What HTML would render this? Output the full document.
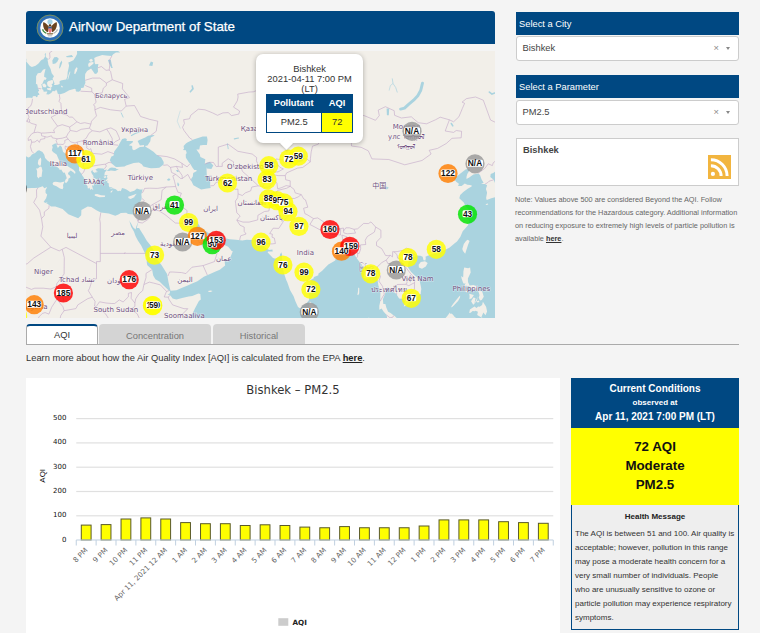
<!DOCTYPE html>
<html lang="en">
<head>
<meta charset="utf-8">
<title>AirNow Department of State</title>
<style>
html,body{margin:0;padding:0;}
body{width:760px;height:633px;overflow:hidden;background:#f4f4f4;font-family:"Liberation Sans",Arial,sans-serif;color:#333;position:relative;}
.abs{position:absolute;}
#hdr{left:26px;top:11px;width:469px;height:33px;background:#004882;border-radius:3px 3px 0 0;}
#hdr .ttl{position:absolute;left:43px;top:-1.5px;line-height:33px;-webkit-text-stroke:0.25px #fff;color:#fff;font-size:13.33px;white-space:nowrap;}
#seal{position:absolute;left:9.5px;top:2.6px;}
#map{left:26px;top:51px;width:469px;height:267px;background:#f2efe9;overflow:hidden;}
.bar{background:#004882;color:#fff;font-size:9.33px;left:516px;width:223px;height:23.5px;line-height:24px;text-indent:3px;}
.sel{left:515.5px;width:221px;height:23px;border:1px solid #ccc;border-radius:3px;background:#fff;font-size:9.33px;line-height:22px;color:#444;}
.sel span{position:absolute;left:6px;}
.sel i{position:absolute;font-style:normal;}
#citybox{left:516px;top:138px;width:221px;height:46px;border:1px solid #ccc;background:#fff;}
#citybox b{position:absolute;left:6px;top:6px;font-size:9.33px;color:#444;}
#note{left:515px;top:193px;width:228px;font-size:7.33px;line-height:13px;color:#666;}
#note b{color:#333;text-decoration:underline;}
.tab{top:324px;height:20px;line-height:24.5px;text-align:center;font-size:9.33px;color:#777;background:#d4d4d4;border-radius:4px 4px 0 0;}
#tab1{left:26px;width:70px;height:18px;background:#fff;color:#333;border:1px solid #aaa;border-top:2px solid #004882;border-bottom:none;line-height:19.5px;}
#tabline{left:26px;top:344px;width:713px;height:1px;background:#aaa;}
#learn{left:26px;top:351px;font-size:9.33px;line-height:14px;color:#333;white-space:nowrap;}
#learn b{text-decoration:underline;color:#222;}
#chart{left:26px;top:378px;width:534px;height:255px;background:#fff;}
#cc{left:571px;top:378px;width:168px;height:250px;background:#eee;}
#cc .h{position:absolute;left:0;top:0;width:168px;height:50px;background:#004882;color:#fff;text-align:center;font-weight:bold;font-size:10px;line-height:14px;}
#cc .y{position:absolute;left:0;top:50px;width:168px;height:77px;background:#ffff00;color:#111;text-align:center;font-weight:bold;font-size:13.33px;line-height:19px;}
#cc .m{position:absolute;left:0;top:127px;width:166px;height:123.5px;border:1px solid #004882;border-top:none;background:#eee;}
#cc .m .t{position:absolute;left:0;top:4.8px;width:166px;text-align:center;font-weight:bold;font-size:8px;line-height:14px;color:#222;}
#cc .m .p{position:absolute;left:3px;top:22.2px;width:164px;font-size:8px;line-height:14px;color:#333;}
#pop{position:absolute;left:229.8px;top:2.8px;width:107.5px;height:89.7px;background:#fff;border-radius:7px;box-shadow:0 1px 5px rgba(0,0,0,.3);font-size:9.33px;color:#333;}
#pop .pt{position:absolute;left:0;top:10px;width:107.5px;text-align:center;line-height:10.1px;}
#pop .th{position:absolute;left:10.1px;top:40.2px;width:87px;height:18.6px;background:#004882;color:#fff;font-weight:bold;line-height:18px;}
#pop .tb{position:absolute;left:10.1px;top:57.8px;width:85px;height:19px;border:1px solid #004882;background:#fff;line-height:18.4px;}
#pop span{position:absolute;top:0;height:100%;text-align:center;}
#pop i{position:absolute;left:26.2px;top:85.2px;width:9px;height:9px;background:#fff;transform:rotate(45deg);box-shadow:1px 1px 2px rgba(0,0,0,.15);}
.sel i.arr{right:8px;top:10px;width:0;height:0;border-left:2.5px solid transparent;border-right:2.5px solid transparent;border-top:3px solid #888;}
</style>
</head>
<body>
<div id="hdr" class="abs"><svg id="seal" width="28" height="28" viewBox="-14 -14 28 28">
<circle r="13.0" fill="#2f6fb5" stroke="#8f9a4e" stroke-width="0.8"/>
<circle r="9.8" fill="#fdfdfb"/>
<circle cx="0" cy="-6.2" r="2.6" fill="#a6d3e6"/>
<path d="M-1.2 -1.5C-3 -3.5 -5 -6 -6.8 -5.6C-7.4 -2 -6 2.5 -2.2 4.2L-1.4 1.5Z" fill="#6b4420"/>
<path d="M1.2 -1.5C3 -3.5 5 -6 6.8 -5.6C7.4 -2 6 2.5 2.2 4.2L1.4 1.5Z" fill="#6b4420"/>
<path d="M-1.6 -1.2h3.2v2h-3.2z" fill="#2d5d9a"/>
<path d="M-1.6 0.6h3.2v2.2c0 1.2-1 1.9-1.6 2.2c-0.6-0.3-1.6-1-1.6-2.2z" fill="#f07a84"/>
<path d="M-1.3 -2.6a1.3 1.1 0 0 1 2.6 0v1.2h-2.6z" fill="#5a3a1c"/>
<path d="M-8 1.5c0.5 2 2 3.6 4 4.2l0.6-1c-1.8-0.6-3-1.8-3.4-3.6z" fill="#3f8a3c"/>
<path d="M8 1.5c-0.5 2-2 3.6-4 4.2l-0.6-1c1.8-0.6 3-1.8 3.4-3.6z" fill="#b9b9b9"/>
<path d="M-3.5 5.2h7l-1 1.2h-5z" fill="#7a5a30"/>
<path d="M-2.6 6.8h5.2l-0.8 1.6h-3.6z" fill="#c9c9c9"/>
</svg><span class="ttl">AirNow Department of State</span></div>
<div id="map" class="abs"><svg width="469" height="267" viewBox="0 0 469 267" style="position:absolute;left:0;top:0">
<path d="M-3.8 49.8L-2.8 49.8L-1.5 47.6L1.6 46.8L5.4 46.8L6.1 47.6L6.9 45.2L9.6 44.9L10.1 46.3L11.5 45.7L11.8 43.9L13.4 43.9L13.0 42.4L11.8 40.9L13.2 39.8L12.0 37.2L11.3 33.4L9.9 32.8L10.1 29.8L10.1 25.3L11.8 22.2L14.9 21.7L17.0 18.8L19.5 17.7L19.1 19.8L18.3 22.9L18.1 25.7L20.6 26.9L19.8 28.8L18.1 28.8L17.2 30.8L16.4 32.7L15.3 33.2L15.8 35.2L16.4 37.2L15.3 37.7L17.2 38.8L17.7 40.8L20.6 40.6L21.4 40.8L20.2 43.3L22.7 43.5L25.2 42.0L26.7 40.0L29.0 40.2L30.1 38.6L31.3 40.8L31.6 42.4L33.3 43.6L38.4 41.9L43.2 39.2L48.8 37.7L50.7 39.2L49.5 38.8L50.1 40.6L53.0 40.7L54.9 39.0L55.0 36.9L57.5 36.7L59.4 31.8L59.2 29.8L59.0 26.4L59.2 22.9L61.1 20.1L65.1 17.6L67.0 20.3L68.9 22.9L70.8 22.6L72.0 20.8L71.8 16.8L72.4 13.1L69.3 13.3L68.6 11.5L68.6 8.9L68.2 7.1L70.7 5.8L73.3 5.0L76.2 3.9L80.0 4.4L85.9 5.0L87.2 3.3L89.9 1.6L92.2 1.6L94.1 1.6L93.3 0.8L91.4 -0.3L89.5 -0.5L88.7 -6.2L50.7 -6.2L51.1 2.9L49.5 5.9L47.4 9.3L44.2 10.7L42.3 11.5L43.1 14.4L42.5 17.6L41.7 21.0L41.4 25.3L40.2 28.4L38.5 28.8L34.7 29.5L33.5 30.5L33.7 32.9L31.6 33.7L29.2 34.1L27.9 34.0L28.6 32.5L27.4 29.5L26.5 27.8L28.0 25.2L25.7 22.2L24.6 18.0L22.5 13.9L21.6 9.1L22.1 7.8L20.8 7.1L19.6 5.3L20.0 1.8L18.7 3.3L19.1 5.6L17.2 8.5L16.2 8.5L14.9 9.5L12.5 12.5L9.6 14.8L5.9 16.0L4.0 15.1L1.9 12.6L0.2 10.4L0.4 8.5L-0.9 5.6L-1.1 3.3L-1.7 -6.2L-3.8 -6.2Z M26.3 9.6L28.2 6.3L30.9 5.9L32.8 7.8L31.3 10.7L29.4 12.6L26.7 12.9Z M33.0 17.3L33.9 12.2L35.8 9.6L36.2 11.5L34.7 15.8L33.5 17.6Z M40.0 5.2L45.7 4.1L47.2 5.9L43.8 6.3L40.8 6.3Z M81.9 8.9L84.7 8.5L85.5 12.2L86.3 15.8L86.8 16.9L85.3 16.9L84.2 14.7L83.0 12.2Z M-3.8 104.5L-2.8 104.5L-0.5 105.1L1.8 106.2L2.7 106.4L4.4 105.6L5.7 103.8L6.8 103.0L8.8 102.3L11.5 99.8L13.1 99.2L16.5 101.0L18.3 103.8L19.1 107.0L21.7 109.7L24.0 111.3L25.7 113.0L27.2 114.6L30.8 115.8L33.3 117.7L33.7 118.9L35.3 118.5L36.1 120.1L37.3 121.7L38.7 121.5L40.1 125.1L40.8 127.3L39.4 128.7L38.7 131.2L40.2 132.1L42.2 129.8L42.4 127.7L44.3 126.4L44.2 124.9L41.9 123.1L42.4 121.4L44.7 119.5L47.6 121.6L49.0 122.9L49.5 121.1L47.4 118.7L43.3 116.2L39.7 113.7L40.7 112.3L37.3 112.2L36.2 111.8L33.2 109.4L30.6 103.4L27.0 101.0L25.8 99.2L26.7 96.3L26.0 94.2L29.0 92.4L31.5 92.5L30.5 93.7L31.8 96.9L32.8 96.1L34.0 94.3L35.8 96.1L37.0 100.8L39.6 102.8L41.7 104.0L45.5 106.4L48.0 108.5L49.7 109.7L51.8 111.3L53.1 115.3L53.0 119.6L55.2 122.5L56.3 124.4L58.1 127.1L59.4 130.0L61.8 130.5L64.4 130.7L66.5 131.9L64.0 131.4L61.8 131.0L59.5 132.0L60.2 133.4L61.6 135.3L61.7 137.3L62.7 137.4L63.2 136.4L64.7 139.3L65.0 137.7L67.4 139.1L66.9 137.9L66.3 135.8L65.9 133.9L67.2 135.0L68.2 133.6L66.9 132.2L69.1 132.0L70.6 133.4L70.5 131.0L72.7 131.8L71.0 128.6L67.8 126.7L66.5 125.4L68.0 125.8L67.4 124.9L65.5 122.1L65.1 120.5L66.4 118.7L66.7 120.4L69.3 122.2L68.9 120.9L70.5 122.1L70.1 120.4L72.0 121.2L69.5 118.4L72.0 117.2L77.6 117.6L78.3 118.9L81.1 118.6L78.8 121.6L78.7 122.0L78.3 124.5L81.7 124.1L80.7 125.4L81.6 127.2L79.2 130.2L82.4 129.6L80.7 131.0L82.8 132.4L82.8 134.8L83.5 136.3L86.8 136.3L83.3 138.0L86.7 137.2L89.9 138.2L91.9 140.3L93.9 139.8L94.8 140.3L96.0 137.1L98.8 137.7L100.9 138.7L104.1 141.1L108.3 139.8L110.9 137.5L113.8 138.6L116.8 138.4L116.9 137.0L116.0 140.9L115.3 143.5L115.7 146.5L115.5 148.4L114.2 151.0L113.1 153.9L112.3 155.9L111.4 159.3L110.3 161.8L107.8 163.4L102.1 162.9L100.2 161.8L94.8 162.0L92.9 163.2L89.3 164.8L82.8 162.5L74.8 161.6L70.4 159.2L65.3 156.1L61.7 155.4L55.4 159.1L55.2 164.3L52.2 167.3L42.3 163.2L36.6 157.9L29.3 155.5L25.1 155.4L21.0 152.4L17.6 151.1L20.1 147.2L21.2 143.6L19.6 142.0L19.5 139.3L21.2 136.1L18.3 137.2L16.7 135.2L12.4 136.7L8.7 137.0L5.4 137.1L1.1 137.3L-1.6 137.7L-2.8 137.1L-3.8 137.1Z M80.6 119.8L83.0 119.9L84.9 119.4L89.1 120.1L92.9 118.3L90.6 117.9L89.5 116.9L85.7 116.6L83.8 117.0L81.9 118.9Z M89.9 115.9L85.7 112.4L83.8 109.2L85.4 105.6L87.5 104.7L88.2 100.5L92.0 95.5L94.1 91.4L96.2 88.0L99.0 87.3L100.9 87.9L100.5 90.1L104.0 90.1L107.0 90.1L106.6 91.4L102.8 94.2L106.1 95.0L106.4 98.2L107.8 99.3L109.2 98.7L112.2 96.9L113.9 95.9L117.9 95.8L118.1 93.9L113.9 94.4L111.6 90.1L113.5 89.0L119.2 86.5L122.1 84.7L127.2 84.0L128.7 84.5L124.8 86.6L124.3 90.3L121.5 94.4L118.8 95.0L121.1 96.7L123.0 97.7L127.8 100.9L130.3 103.6L135.2 106.6L137.7 111.0L137.6 113.6L133.3 116.7L130.3 116.9L125.3 117.3L123.3 116.9L117.4 115.4L115.8 113.2L112.9 111.6L107.7 111.9L100.2 114.6L98.6 115.5L91.8 116.0Z M159.9 92.5L161.8 91.2L167.5 88.4L176.7 85.6L180.9 85.6L181.6 89.0L180.9 93.9L177.1 93.9L174.0 94.4L173.3 98.5L170.4 98.5L173.8 103.2L174.4 105.9L179.3 108.2L178.8 113.1L180.5 111.8L183.9 110.8L187.3 114.4L185.4 117.9L180.9 117.4L180.5 115.9L180.7 121.9L180.9 124.9L183.2 125.4L184.3 127.3L184.1 134.8L184.7 137.0L180.9 137.4L179.5 137.8L175.2 138.4L171.9 136.7L167.4 134.2L165.1 129.6L165.1 128.0L166.8 125.4L167.2 121.9L170.8 120.1L170.2 119.1L168.3 118.9L166.4 116.4L164.1 112.6L163.0 111.4L159.9 106.7L159.7 103.5L160.7 101.9L159.9 99.3L156.9 99.0L158.0 97.7L157.6 95.0Z M258.5 95.0L260.8 89.5L266.5 86.5L274.1 86.8L280.6 86.2L280.6 88.7L274.9 89.0L267.3 88.4L263.1 92.3L261.2 96.3Z M269.2 109.5L273.4 108.1L277.6 108.2L276.8 110.0L273.0 111.2L270.3 110.8Z M358.3 137.0L360.6 135.5L362.8 136.7L360.9 138.6Z M151.2 132.7L151.9 131.2L153.3 133.6L152.7 135.3L151.7 135.1Z M140.9 128.8L142.8 127.3L144.5 128.3L143.2 129.8L141.7 129.5Z M150.0 118.9L151.9 118.9L152.9 120.9L151.2 120.9Z M123.0 14.4L124.9 10.4L127.2 11.5L126.4 15.1Z M165.3 34.5L166.8 34.2L167.9 37.9L164.5 41.8L163.4 40.8L166.0 37.5Z M360.6 57.6L363.2 57.6L362.8 64.3L360.9 64.3Z M481.6 94.4L485.1 94.4L485.1 98.7L481.6 98.7Z M289.4 89.0L292.0 89.0L291.3 91.2L289.4 91.2Z M297.0 78.9L302.3 78.3L301.9 80.6L297.4 80.6Z M163.7 270.8L163.9 267.9L168.8 257.8L172.9 250.0L174.8 248.4L174.3 242.9L172.3 242.4L166.3 245.1L162.6 245.5L156.1 247.1L150.4 248.4L146.6 247.5L144.6 244.8L143.4 243.8L141.7 243.9L143.2 242.5L143.9 242.4L143.9 240.3L141.8 238.4L137.5 234.5L133.7 230.7L129.4 228.2L127.2 224.6L126.1 218.6L121.3 214.2L120.8 212.1L120.7 206.5L118.6 201.6L115.2 194.6L112.0 189.7L109.6 185.3L107.9 180.4L105.1 175.7L103.0 168.7L103.6 170.2L105.1 172.6L107.1 176.2L109.6 178.4L109.8 177.6L110.5 175.0L112.3 170.5L112.1 171.6L110.8 177.0L113.1 177.0L114.9 180.0L117.9 184.8L120.8 189.8L124.0 193.8L127.6 199.1L128.2 204.5L132.4 210.0L135.5 214.1L141.1 223.0L142.5 231.3L143.8 237.1L144.6 239.7L150.4 239.2L156.1 236.8L161.1 234.7L166.1 232.4L171.4 230.3L177.8 225.8L185.1 222.6L189.6 220.6L193.8 218.8L199.1 214.6L198.8 212.0L198.8 208.9L202.2 208.9L204.9 204.9L206.8 200.2L205.7 200.1L202.2 195.7L195.1 192.6L193.6 189.4L193.8 184.3L192.6 185.5L192.1 186.6L189.5 188.8L186.1 192.2L179.3 193.3L175.5 193.9L174.0 191.6L175.5 190.0L175.4 188.7L175.5 186.2L174.0 185.1L172.5 187.8L172.7 191.0L170.2 187.2L169.8 183.9L170.0 183.0L168.1 181.5L165.3 178.9L163.7 175.3L161.8 171.2L161.1 171.1L162.2 170.5L161.8 168.5L164.1 168.7L165.6 166.7L166.4 166.5L167.9 168.3L170.0 168.3L172.6 173.2L175.2 177.8L177.3 177.9L179.3 179.8L183.5 182.8L188.0 183.4L193.3 180.7L195.7 181.5L196.3 183.2L199.0 187.2L203.7 188.3L209.9 188.7L216.4 189.4L220.7 188.8L225.1 189.1L230.4 188.3L232.6 188.5L234.1 190.7L235.7 194.1L238.7 195.8L240.6 197.5L243.1 199.0L246.4 198.5L246.7 200.4L242.0 200.5L241.7 201.5L244.1 203.9L247.0 206.9L249.4 207.7L253.6 205.7L254.0 203.4L255.3 201.2L256.1 203.8L255.9 206.1L256.4 208.9L256.3 214.8L258.1 222.6L260.1 228.8L261.3 231.3L264.0 238.9L267.6 245.2L269.4 250.2L272.0 255.9L274.3 257.4L276.6 254.7L279.9 252.9L283.1 248.9L283.1 247.1L283.0 242.6L284.8 238.1L284.2 234.5L284.2 232.5L284.6 229.0L287.5 227.6L288.0 226.0L292.4 224.2L292.3 222.8L296.2 219.8L302.3 213.5L305.9 211.4L309.2 209.5L310.3 205.7L310.3 204.7L312.3 204.0L314.5 203.9L317.9 203.8L321.7 202.8L324.0 200.8L325.5 200.4L328.6 201.2L329.2 204.7L330.5 207.1L332.8 210.0L335.2 213.0L338.1 217.4L338.9 221.8L337.7 226.4L339.2 227.2L342.3 227.7L345.7 225.0L348.0 221.4L350.7 224.8L351.6 229.5L352.4 234.5L354.5 240.6L354.3 246.2L354.3 250.1L353.5 253.9L353.3 254.7L353.3 258.7L355.6 257.6L357.5 260.4L360.0 263.3L360.3 263.9L360.9 265.0L361.1 267.7L361.1 270.8Z M371.6 270.8L371.7 268.0L368.4 264.7L366.8 263.8L364.6 262.0L362.1 260.8L360.2 256.2L359.4 253.1L357.3 253.1L356.9 248.3L359.0 243.1L359.7 240.1L359.8 237.2L362.1 236.4L363.2 238.7L363.2 239.8L364.7 239.7L367.8 241.1L370.8 243.3L371.2 244.6L373.1 247.6L375.7 247.8L376.9 248.6L379.1 250.0L377.8 255.4L380.0 254.7L381.7 252.9L385.3 250.0L386.8 248.7L390.6 246.4L394.8 242.7L394.8 241.3L395.3 238.1L394.9 235.4L393.7 230.1L391.1 226.3L388.7 224.4L385.0 220.7L381.7 215.9L382.3 211.6L385.3 207.3L386.8 206.7L390.1 204.5L394.4 204.7L396.7 205.7L397.5 209.3L399.4 209.6L399.8 206.9L399.4 205.7L401.7 204.7L405.3 203.6L411.4 201.8L411.6 199.3L413.9 201.2L418.2 199.2L423.4 196.8L428.7 192.3L431.0 190.6L434.4 185.7L436.7 180.2L439.2 177.4L442.0 174.2L443.2 168.9L439.7 167.2L439.4 166.7L443.2 164.7L443.0 162.3L440.9 160.9L443.0 160.9L443.2 159.1L439.4 155.1L437.8 151.4L433.3 147.3L434.2 144.0L437.3 141.0L441.7 137.7L445.6 135.5L445.8 134.6L443.9 134.0L441.3 133.8L438.8 132.5L435.6 135.1L432.1 135.1L432.9 132.7L430.2 130.7L427.4 127.1L430.2 126.1L434.4 122.4L439.6 118.4L443.2 117.4L444.1 118.6L441.3 122.9L440.5 125.8L440.5 128.0L443.2 126.6L447.4 123.6L452.3 122.6L454.0 123.9L455.5 128.3L457.6 131.7L455.0 133.1L458.8 133.1L461.1 134.3L459.9 137.9L461.1 141.4L460.1 146.9L460.7 149.1L465.3 147.3L469.4 146.1L472.8 145.9L472.8 270.8Z M472.8 133.6L469.4 133.1L467.7 128.8L464.3 126.1L464.7 122.9L467.2 121.9L469.4 120.4L472.8 119.9Z M-3.8 264.3L-2.8 264.3L-1.7 266.0L-0.3 268.1L-0.2 270.8L-3.8 270.8Z" fill="#aad3df"/>
<path d="M16.4 32.9L18.7 32.4L20.4 34.5L20.0 36.2L17.6 36.2L16.6 34.9Z M21.0 31.8L22.1 30.2L25.9 29.0L27.1 29.6L27.1 32.2L25.5 33.5L26.5 34.9L24.8 36.9L22.1 35.2L21.4 34.2Z M21.0 37.2L24.2 36.9L25.5 37.5L24.6 39.4L22.5 39.0L21.0 38.2Z M48.2 22.6L48.8 18.7L50.5 16.3L51.6 16.9L50.9 20.1L49.1 23.3Z M41.5 28.4L42.5 24.0L43.8 20.5L44.4 20.8L43.1 25.0L42.1 28.4Z M62.1 13.7L62.9 11.8L66.3 11.1L68.0 11.8L66.7 13.3L65.1 14.4L63.6 15.8L62.7 16.0Z M63.0 9.3L65.1 7.8L66.9 8.9L66.3 10.6L64.4 10.7Z M35.1 35.9L35.4 34.5L36.8 35.5L36.6 36.5Z M11.8 112.3L12.4 109.0L14.7 106.6L15.3 108.7L14.9 113.8L14.1 115.0L12.6 114.1Z M10.1 117.4L11.1 120.1L11.1 125.8L12.8 127.4L13.7 125.8L15.5 126.1L16.0 121.9L16.4 119.4L15.5 116.1L14.1 115.6L11.8 117.4Z M26.5 132.7L27.6 131.0L29.9 130.7L34.3 131.5L38.5 130.4L37.0 134.1L37.3 136.5L36.6 138.2L33.9 137.4L30.5 135.2L27.3 133.9Z M68.8 143.3L71.2 143.1L75.0 144.3L79.2 144.5L78.8 145.9L73.3 146.3L68.8 144.7Z M102.1 145.7L104.4 145.0L107.2 144.1L110.7 142.7L108.3 145.7L108.7 146.0L104.7 147.9L102.6 147.2Z M84.6 140.5L86.6 139.1L86.1 141.0L84.7 141.7Z M77.5 125.8L79.8 125.1L80.4 126.6L78.5 127.0Z M77.7 129.0L78.7 129.0L78.5 130.7L77.7 130.5Z M20.0 151.7L21.2 151.2L21.2 152.1L20.2 152.1Z M284.4 250.7L287.1 253.9L288.3 255.6L290.1 258.8L290.8 261.6L289.9 263.7L287.9 265.0L285.9 265.7L284.5 265.3L283.1 261.9L283.0 257.6L283.3 254.0L283.3 251.2Z M182.0 240.1L184.7 239.6L186.6 240.1L184.7 241.1L182.8 240.9Z M332.2 236.4L333.3 237.2L333.2 242.3L332.2 244.2L331.4 243.8L332.0 240.3Z M202.2 207.9L203.5 208.5L202.6 210.0Z M189.6 183.2L193.4 181.7L193.1 182.5L190.8 183.4Z M341.5 266.9L343.0 266.8L346.5 268.3L350.3 268.3L350.3 270.8L341.5 270.8Z M392.7 213.8L394.8 211.0L399.0 210.3L401.7 212.0L399.8 215.4L396.0 217.8L392.9 216.6Z M441.8 188.7L443.6 190.0L442.0 194.1L440.3 199.3L439.2 202.8L437.0 199.9L436.3 198.1L437.8 192.9L439.6 190.6L440.5 189.4Z M438.2 216.6L442.2 217.2L444.1 216.6L444.7 221.4L441.9 227.6L442.0 230.9L443.6 234.5L447.4 234.1L450.8 235.2L451.5 238.4L451.5 240.1L448.9 238.4L446.2 237.6L442.4 234.9L439.7 235.6L438.2 235.1L439.6 232.3L437.8 232.7L436.9 231.3L435.6 227.4L435.2 225.0L437.1 226.4L437.3 224.2L437.4 220.4Z M437.5 236.6L440.5 236.8L441.7 239.9L440.1 241.5L439.2 239.6Z M425.7 256.6L428.3 253.9L432.1 250.0L434.0 246.6L434.2 244.6L433.1 245.4L430.2 248.9L427.2 252.7L425.3 255.4Z M443.2 242.7L447.9 244.0L445.8 247.3L443.4 248.3L443.6 245.0Z M445.1 250.2L447.4 246.4L449.5 246.9L448.5 252.7L447.2 253.7Z M448.9 251.6L450.8 247.7L451.4 245.2L451.2 248.9L449.6 251.6Z M452.3 240.1L456.1 240.3L457.8 245.8L455.7 249.1L454.0 249.6L452.7 246.6L453.5 244.2Z M450.4 250.4L452.7 249.6L453.5 251.0L451.5 251.6Z M443.2 262.0L443.9 258.5L448.5 255.6L450.6 257.0L452.1 255.4L453.6 255.8L456.1 253.9L456.9 250.8L460.1 255.8L461.1 260.4L459.5 264.3L457.4 261.6L456.5 263.5L455.5 265.8L456.5 267.1L451.2 263.9L451.9 260.8L449.6 259.7L448.9 260.2L446.6 260.0L444.7 261.8Z M418.6 270.8L418.6 268.1L420.9 265.5L423.9 261.6L424.5 263.1L425.7 262.5L427.2 263.9L428.7 266.0L430.6 267.3L433.1 267.7L432.9 270.8Z M459.4 153.7L461.1 152.6L462.4 153.0L461.1 154.1Z M440.5 160.7L443.2 161.8L442.0 162.1Z" fill="#f2efe9"/>
<path d="M374.6 58.1L378.5 57.1L382.3 53.6L387.6 49.2L391.8 44.7L394.8 39.2L396.5 32.2" fill="none" stroke="#aad3df" stroke-width="2.9" stroke-linecap="round" stroke-linejoin="round"/><path d="M463.4 41.1L466.0 43.1L468.7 42.1" fill="none" stroke="#aad3df" stroke-width="1.6" stroke-linecap="round" stroke-linejoin="round"/><path d="M425.3 72.5L426.8 74.9" fill="none" stroke="#aad3df" stroke-width="1.5" stroke-linecap="round" stroke-linejoin="round"/><path d="M366.3 27.8L367.0 32.5L369.7 36.5L371.2 41.1" fill="none" stroke="#aad3df" stroke-width="0.7" stroke-linecap="round" stroke-linejoin="round"/><path d="M367.0 32.5L364.4 34.5L363.2 39.2" fill="none" stroke="#aad3df" stroke-width="0.6" stroke-linecap="round" stroke-linejoin="round"/><path d="M154.2 77.2L151.2 70.2L152.7 64.9L154.2 60.0" fill="none" stroke="#aad3df" stroke-width="0.45" stroke-linecap="round" stroke-linejoin="round"/><path d="M201.4 92.8L202.2 97.7" fill="none" stroke="#aad3df" stroke-width="0.9" stroke-linecap="round" stroke-linejoin="round"/><path d="M208.3 87.9L212.5 87.0" fill="none" stroke="#aad3df" stroke-width="1.1" stroke-linecap="round" stroke-linejoin="round"/><path d="M105.5 84.5L109.7 82.3L113.1 81.2" fill="none" stroke="#aad3df" stroke-width="1.2" stroke-linecap="round" stroke-linejoin="round"/><path d="M97.1 66.1L95.2 61.9" fill="none" stroke="#aad3df" stroke-width="0.9" stroke-linecap="round" stroke-linejoin="round"/>
<path d="M22.7 8.5L24.0 6.3L23.6 1.8L26.7 -0.5L25.9 -6.7 M12.0 37.2L15.1 37.9 M6.5 47.9L5.9 52.0L4.6 55.1L1.9 57.0L2.3 60.6L1.9 63.4 M-8.0 59.4L-2.8 59.4L1.9 60.6 M-5.7 66.1L-2.8 67.8L1.2 70.5L2.3 71.1L3.3 71.1 M1.9 63.4L3.1 66.1L2.3 67.3L3.8 69.0L3.3 71.1 M2.3 67.3L1.2 70.5 M3.3 71.1L5.7 72.5L10.3 73.7L8.0 81.7 M8.0 81.7L11.8 81.2L15.3 82.0L15.6 84.8L18.9 85.6L18.9 87.6L14.5 88.4L13.4 91.4L11.3 89.0L9.0 91.0L5.7 91.2L5.0 88.4L2.3 89.5L2.3 87.3L5.7 82.8L8.0 81.7 M5.7 91.2L4.4 95.5L5.7 100.1L7.8 102.4 M33.3 43.6L33.9 47.6L33.0 50.4L34.9 52.3L35.3 57.9L36.2 61.6L35.6 62.6 M35.6 62.6L33.5 61.9L26.7 65.5L25.2 66.1L26.9 68.7L31.6 75.2 M31.6 75.2L30.3 76.3L27.6 78.9L28.6 81.7L25.5 81.4L18.9 82.0L15.6 82.0 M31.6 75.2L36.2 73.7L43.6 76.0 M18.9 85.6L21.0 86.2L25.5 84.8L26.3 86.8L31.3 87.8 M31.3 87.8L36.2 87.2L40.4 85.9L41.9 82.8L44.2 79.7L43.6 76.0 M31.3 87.8L30.1 89.5L30.9 91.7L31.4 92.8 M30.9 93.5L34.3 93.3L37.3 93.5L38.9 91.4L38.7 89.5L42.1 88.0L40.4 85.9 M42.1 88.0L44.6 90.9L49.1 92.0L51.1 91.1 M51.4 96.7L47.6 95.3L43.8 95.0L41.2 96.1L39.3 95.0L39.1 97.1L40.8 100.3L43.8 104.0L46.3 106.6L49.3 109.0 M51.1 91.1L51.6 93.3L53.0 95.0L51.4 96.7L52.8 96.9L52.0 99.8L53.7 101.4L52.2 104.0L50.3 105.3L49.3 109.0 M52.2 104.0L56.6 107.4L55.4 109.0L53.7 108.7L53.0 112.6 M51.1 91.1L56.2 89.9L60.2 87.3L62.9 82.3L66.3 79.7 M56.2 89.9L61.0 95.0L60.6 96.9L63.4 98.7L64.8 97.7L65.5 100.3L64.4 101.9L66.7 105.6L64.2 110.3 M64.2 110.3L61.3 110.5L57.5 112.5L57.1 115.9L59.0 117.6L62.5 116.4L66.3 115.2 M64.2 110.3L66.7 113.1L66.5 115.1L72.4 114.1L78.1 113.3L79.4 113.2 M59.0 117.6L57.5 121.4L55.2 123.4 M53.7 108.7L55.6 109.0L57.5 112.5 M56.6 107.4L58.3 105.3L60.6 107.4L61.3 110.5 M78.3 118.1L80.4 115.1L79.4 113.2L83.0 111.3L85.7 111.9 M65.5 100.3L66.7 102.4L75.8 103.2L81.9 100.6L88.0 102.7 M86.5 93.6L86.1 87.3L83.0 81.7L80.6 78.0 M66.3 79.7L73.9 80.9L80.6 78.0L84.9 76.9L90.1 79.7L93.1 86.2L93.7 88.4L89.3 90.6L86.5 93.6L92.0 94.2 M44.4 79.5L50.7 80.6L55.2 78.3L63.4 77.2L66.3 79.7 M43.6 76.0L47.2 73.7L50.9 70.8L54.5 72.5L58.7 71.7L64.9 73.1L63.4 77.2 M35.6 62.6L40.8 64.0L43.4 66.1L46.5 66.1L50.9 70.8 M64.9 73.1L65.5 70.2L70.5 64.9L68.9 58.8L68.9 55.1L67.4 53.9L70.1 51.4L68.6 43.4L65.9 40.8L54.5 40.2 M65.9 40.8L65.7 37.2L60.2 34.9L59.2 34.2 M68.6 43.4L76.2 41.8L77.3 37.2L80.4 34.5L80.4 32.0 M59.2 29.3L66.3 27.1L73.9 27.1L80.4 32.0L86.3 28.8L84.6 20.5L83.2 19.0 M71.8 16.8L75.4 15.5L80.0 19.3L83.2 19.0L83.8 13.7L83.8 8.5L85.9 5.0 M86.3 28.8L96.7 32.5L96.4 37.9L103.6 46.6L98.6 48.2L100.2 55.1 M68.9 58.8L74.3 56.4L84.6 58.8L95.4 60.0L100.2 55.1L108.5 54.5L114.6 65.5L123.8 68.4L131.8 70.2L130.2 80.3L124.7 84.5 M131.4 104.5L140.9 105.6L148.5 107.9L155.9 112.3L161.1 115.9L164.1 112.6 M137.3 114.3L141.3 113.9L144.5 116.4L150.4 115.4L156.5 116.4L155.9 112.3 M144.5 116.4L145.5 121.4L149.7 123.4L154.8 127.6L156.3 127.5 M150.4 115.4L152.3 118.9L156.1 124.4L156.3 127.5L161.8 123.4L165.1 129.6 M149.7 123.4L146.8 124.9L148.5 130.2L149.7 135.5L140.3 136.0L131.4 137.4L123.8 137.2L118.6 137.4L116.9 141.2L116.0 141.6 M140.3 136.0L136.1 139.3L135.2 148.7L126.8 153.4L119.2 158.3L115.2 156.2 M116.0 147.5L118.4 149.6L115.6 153.3L112.7 154.6 M115.6 153.3L115.2 156.2L114.4 161.8L112.3 170.5 M109.5 163.1L112.0 170.7 M126.8 153.4L128.3 158.9L120.0 161.8L123.8 166.3L121.9 168.5L116.3 172.0L112.2 171.3 M128.3 158.9L132.9 159.8L139.0 163.6L149.3 172.0L156.3 172.4L159.7 168.5L161.8 168.5 M156.3 172.4L160.7 174.9L163.4 174.9 M149.7 135.5L151.9 141.2L155.4 142.2L152.1 150.5L154.6 154.6L161.1 159.6L160.7 164.1L161.8 166.3L163.9 168.7 M142.0 225.0L143.6 221.0L146.6 221.0L155.7 221.6L159.9 222.6L166.0 216.2L177.1 214.6L181.3 224.0 M177.1 214.6L188.5 210.6L191.0 202.4L189.2 199.5L179.3 198.5L175.5 193.7 M189.2 199.5L191.5 193.3L193.6 190.2 M172.5 191.0L174.0 191.6 M74.8 161.6L73.7 168.5L74.3 172.0L74.3 202.4L74.3 210.6L70.5 210.6L70.5 212.6L40.0 196.4L36.2 198.3L33.2 199.9L24.8 196.2L14.9 185.1L16.8 175.9L15.5 167.6L18.3 164.5L18.3 160.9L22.9 157.3L23.1 154.3 M74.3 202.4L98.6 202.4L99.0 201.6L98.3 202.4L119.6 202.4 M15.5 167.6L13.6 159.1L7.7 151.4L10.7 145.9L10.5 138.9L12.0 136.7 M24.8 196.2L7.7 207.1L1.2 212.8L-4.7 214.0L-4.7 226.6L-7.6 229.0L-16.0 229.3 M36.2 198.3L38.3 206.5L38.1 223.0L30.9 232.5L30.4 235.6 M30.9 235.6L24.8 238.0L17.2 237.2L8.8 237.2L5.4 238.4L-1.9 235.4L-5.3 236.4L-7.2 243.4 M32.8 238.1L34.7 244.2L29.7 250.0L25.7 256.2L22.9 263.1L19.1 261.6L16.4 262.4L12.8 266.0L11.8 270.0 M30.4 235.6L32.8 238.1L35.8 240.5L36.6 246.2L38.1 250.0L32.4 250.2L37.0 255.8L38.1 259.7L34.7 264.7L33.9 269.2 M38.1 259.7L49.9 257.6L51.8 253.9L61.7 247.7L66.3 246.2 M70.5 212.6L70.5 227.8L66.3 228.6L63.6 237.2L62.3 239.7L66.3 246.2L69.1 250.4L68.6 255.1L71.2 256.6L75.4 259.1L79.6 262.9L83.4 268.9 M70.5 255.1L73.5 250.8L80.0 252.0L85.7 252.5L88.7 252.5L93.3 248.9L97.1 251.0L102.4 245.8L102.4 242.3L105.5 241.5L105.1 247.3L108.9 252.0L108.9 255.4L104.7 258.5L111.2 262.7L113.5 267.7L115.8 270.8 M108.9 252.0L109.7 247.9L112.7 243.1L116.7 239.6L117.9 233.5L120.0 226.6L120.0 222.4L126.1 218.6 M117.9 233.5L123.4 231.1L127.6 232.1L134.4 233.9L140.5 240.4L143.2 239.6 M140.5 240.4L138.2 246.0L142.4 246.2L143.8 244.3 M142.4 246.2L142.8 248.1L146.6 253.9L158.0 257.7L161.8 257.7L150.4 269.2L142.8 271.2 M166.4 88.7L163.7 87.0L158.0 79.5L156.5 76.3L158.4 72.5L157.6 68.7L163.5 67.8L164.7 64.3L172.3 58.2L179.0 58.8L186.6 61.9L191.5 64.3L196.9 61.9L202.2 61.6L205.6 64.6L212.8 63.1L213.6 60.0L207.5 56.1L211.3 49.8L212.1 46.0L211.7 43.1L222.7 41.1L227.3 40.8L238.7 36.5L248.6 34.5L250.2 41.8L258.9 43.1L258.5 46.3L263.1 45.3L270.3 42.1L275.7 47.6L284.0 63.1L296.6 61.9L303.5 70.2L311.5 72.5 M311.5 72.5L305.6 77.2L304.8 84.8L295.1 84.0L292.4 93.1L286.5 95.2L285.2 100.9L284.4 107.7L284.4 110.8 M284.4 110.8L280.6 107.7L267.3 107.4L261.6 105.6L258.9 109.5L250.2 107.9L249.2 110.5 M249.2 110.5L247.1 112.1L242.0 115.1L238.0 117.4L233.0 116.1L230.4 109.7L230.7 106.6L226.2 103.0L211.9 100.3L202.0 93.1L192.3 96.1L192.3 115.4 M192.3 115.4L190.2 115.6L187.5 111.5L184.3 111.3L178.8 113.1 M192.3 115.4L196.3 115.4L196.1 112.3L202.2 107.7L207.5 110.8L207.5 115.9L214.8 116.4L216.5 120.4L224.1 127.1L232.3 134.8 M184.3 134.8L187.7 134.6L190.2 131.2L196.9 130.5L201.4 133.6L205.0 134.1L208.9 138.2L211.9 138.2L212.1 142.9 M212.1 142.9L216.3 144.5L219.3 141.9L224.7 139.8L225.8 136.0L232.3 134.8L237.2 135.5 M237.2 135.5L238.0 136.5L242.9 136.0L246.4 132.2L249.0 129.8L250.9 132.2L251.7 137.9L255.9 136.5L260.1 134.6L264.2 135.3 M237.2 135.5L239.1 130.2L236.8 123.9L242.9 120.9L247.9 120.9L247.1 116.9L252.1 114.4L249.2 110.5 M242.9 120.9L242.9 124.1L248.3 123.9L252.1 124.6L259.3 124.6 M247.9 120.9L252.1 120.9L257.4 117.9L254.0 116.4L252.1 114.4 M259.3 124.6L260.6 121.9L271.5 117.1L276.8 116.4L284.4 110.8 M259.3 124.6L259.7 128.8L264.2 129.8L264.2 135.3 M264.2 135.3L260.8 137.2L252.1 139.3L250.2 141.0L251.7 145.0L249.4 148.2L249.8 150.3L245.4 150.5L246.7 153.5L243.7 154.9L242.9 160.0L238.5 160.5L231.9 164.3L231.7 168.9L223.1 171.1L217.0 171.1L210.8 169.1 M212.1 142.9L211.7 146.8L209.4 150.1L209.6 152.4L210.8 161.8L214.2 165.0L210.8 169.1L214.0 174.2L218.2 176.1L218.2 180.4L220.1 183.0L214.6 184.9L213.6 189.1 M238.7 195.4L240.8 192.9L246.0 192.9L249.4 192.5L248.3 187.0L246.0 186.2L246.4 183.2L243.7 182.5L247.1 177.2L252.8 177.4L258.5 168.7L263.5 163.8L262.7 159.6L266.0 158.3L263.1 156.0L260.8 154.2L259.9 149.1L262.0 147.1L268.4 147.5L272.2 145.9L275.3 143.6 M264.2 135.3L268.1 138.4L269.2 141.9L275.3 143.6L277.6 147.8L279.5 148.9L281.8 156.2L278.9 156.9L277.6 157.3L278.9 162.7L281.0 163.6L287.5 167.6 M287.5 167.6L283.9 173.5L288.2 175.7L296.2 180.0L301.2 180.2L305.7 183.2L314.5 184.0L314.7 177.6 M287.5 167.6L291.7 166.9L298.5 171.5L303.1 174.4L306.5 177.6L314.7 177.6L317.4 177.0L317.5 180.2 M317.5 180.2L319.8 176.8L323.3 176.8L328.0 178.3 M317.5 180.2L317.9 181.9L321.2 182.8L329.5 182.1L328.0 178.3L331.6 177.8L337.7 172.4L342.3 172.6L345.0 170.9L349.7 176.1 M349.7 176.1L348.4 181.1L341.3 185.5L339.2 189.3L339.8 193.5L334.5 193.9L334.7 197.9L333.2 202.4L331.6 202.5L331.6 205.3L330.5 207.1 M318.1 203.8L317.0 197.5L314.5 192.0L317.0 189.1L315.8 184.0L321.0 185.9L321.0 188.7L330.9 190.0L329.3 192.5L326.3 193.7L326.1 195.8L327.8 198.5L330.5 195.4L331.6 202.5 M349.7 176.1L354.9 179.1L354.9 186.4L350.5 191.0L350.5 194.6L355.6 197.5L357.3 200.4L359.6 204.5L362.1 204.7L364.2 204.3 M364.2 204.3L360.2 209.1L355.8 211.6L351.0 216.2L351.2 219.8L354.5 225.4L352.9 230.1L356.6 235.4L358.3 243.1L355.0 248.7L354.3 250.1 M364.2 204.3L366.5 205.9L366.7 200.6L368.0 200.8L371.2 200.6L378.1 199.1L380.2 197.0L385.3 199.1L384.7 200.6L390.1 204.5 M368.0 200.8L371.0 203.6L371.6 207.1L377.3 208.9L375.0 211.8L379.6 216.0L384.7 222.8L388.2 226.4L388.7 230.5L388.5 231.7 M360.2 209.1L361.9 212.6L364.6 212.4L364.0 220.6L367.8 217.8L372.4 217.0L377.7 220.6L377.9 225.0L381.1 228.2L380.9 232.3L379.6 233.3 M379.6 233.3L382.8 234.7L388.5 231.7L388.4 238.4L382.1 243.8L383.4 246.9L379.2 246.4L376.7 248.4 M379.6 233.3L371.2 233.5L368.7 236.2L370.3 240.7L370.8 243.3 M360.3 263.8L364.0 266.8L366.8 266.2L367.8 264.5 M313.4 72.7L316.4 78.3L325.2 85.6L325.5 95.0L335.1 96.3L342.3 99.8L345.9 107.9L362.8 108.5L378.8 113.8L396.0 109.5L405.1 103.0L403.2 99.3L411.6 97.4L420.3 92.5L426.0 87.3L435.2 86.8L435.6 80.3L430.2 79.5L427.6 81.4L419.2 80.0L423.4 68.8 M311.5 72.5L313.4 72.7L320.6 68.1L330.5 63.1L338.1 64.6L349.5 69.3L353.3 64.6L352.2 59.1L359.4 55.7L368.2 59.7L368.6 64.3L375.4 67.0L385.3 65.8L392.2 71.7L400.5 72.8L409.7 68.7L414.2 66.2L423.4 68.8 M423.4 68.8L427.6 70.8L432.9 65.8L436.3 57.6L438.6 52.3L436.1 51.1L440.5 47.6L449.6 46.0L457.3 49.2L464.5 69.0L476.3 74.6 M452.5 122.1L458.8 117.4L462.2 112.8L466.4 114.6L467.2 111.8L473.6 106.7 M459.2 132.9L461.4 131.9L463.0 130.2L467.7 128.8" fill="none" stroke="#bfa3c6" stroke-opacity="0.75" stroke-width="0.75" stroke-linejoin="round"/>
<g font-family="'DejaVu Sans','Noto Sans CJK SC',sans-serif" fill="#6f4f80" stroke="#ffffff" stroke-opacity="0.5" stroke-width="1.0" paint-order="stroke" style="paint-order:stroke">
<text x="41.5" y="62.6" font-size="7.0" text-anchor="end">Deutschland</text>
<text x="85.2" y="47.0" font-size="6.6" text-anchor="middle">Беларусь</text>
<text x="108.6" y="80.6" font-size="6.7" text-anchor="middle">Україна</text>
<text x="72.1" y="94.4" font-size="7.0" text-anchor="middle">România</text>
<text x="32.5" y="114.9" font-size="7.0" text-anchor="middle">Italia</text>
<text x="68.1" y="132.9" font-size="7.0" text-anchor="middle">Ελλάς</text>
<text x="114.4" y="129.4" font-size="7.0" text-anchor="middle">Türkiye</text>
<text x="214.8" y="79.7" font-size="7.0" text-anchor="start">Қазақстан</text>
<text x="201.0" y="117.7" font-size="7.0" text-anchor="start">O‘zbekiston</text>
<text x="179.0" y="129.9" font-size="7.0" text-anchor="start">Türkmenistan</text>
<text x="184.6" y="160.4" font-size="7.0" text-anchor="middle">ایران</text>
<text x="225.7" y="153.7" font-size="7.0" text-anchor="middle">افغانستان</text>
<text x="245.5" y="169.2" font-size="7.0" text-anchor="middle">پاکستان</text>
<text x="279.4" y="203.7" font-size="7.0" text-anchor="middle">India</text>
<text x="197.7" y="210.4" font-size="7.0" text-anchor="middle">عمان</text>
<text x="159.0" y="230.9" font-size="7.0" text-anchor="middle">اليمن</text>
<text x="134.0" y="195.4" font-size="7.0" text-anchor="start">السعودية</text>
<text x="126.5" y="157.7" font-size="7.0" text-anchor="start">العراق</text>
<text x="46.0" y="186.7" font-size="7.0" text-anchor="middle">ليبيا</text>
<text x="92.2" y="184.2" font-size="7.0" text-anchor="middle">مصر</text>
<text x="17.4" y="222.9" font-size="7.0" text-anchor="middle">Niger</text>
<text x="21.5" y="257.7" font-size="7.0" text-anchor="end">Nigeria</text>
<text x="50.9" y="231.0" font-size="7.0" text-anchor="middle">Tchad تشاد</text>
<text x="81.0" y="231.8" font-size="7.0" text-anchor="start">السودان</text>
<text x="89.8" y="260.7" font-size="7.0" text-anchor="middle">South Sudan</text>
<text x="158.4" y="266.9" font-size="7.0" text-anchor="middle">Soomaaliya</text>
<text x="353.3" y="136.6" font-size="7.0" text-anchor="middle">中国</text>
<text x="391.5" y="229.8" font-size="7.0" text-anchor="middle">Việt Nam</text>
<text x="445.3" y="239.8" font-size="7.0" text-anchor="middle">Philippines</text>
<text x="362.8" y="241.0" font-size="7.0" text-anchor="middle">ประเทศไทย</text>
<text x="380.5" y="77.5" font-size="7.0" text-anchor="middle">Монгол</text>
<text x="362.0" y="88.0" font-size="7.0" text-anchor="start">улс ᠮᠣᠩᠭᠣᠯ</text>
<text x="379.8" y="98.2" font-size="6.0" text-anchor="middle">ᠮᠣᠩᠭᠣᠯ</text>
<text x="340.0" y="217.5" font-size="6.5" text-anchor="middle">မြန်မာ</text>
</g>
<g font-family="'Liberation Sans',Arial,sans-serif" font-weight="bold" font-size="8.4" text-anchor="middle">
<circle cx="-8.8" cy="137.7" r="9.6" fill="#3c3c3c" fill-opacity="0.82"/>
<circle cx="-8.4" cy="265.0" r="9.6" fill="#ffff00" fill-opacity="0.82"/>
<circle cx="8.2" cy="253.7" r="9.6" fill="#ff7e00" fill-opacity="0.82"/>
<circle cx="37.4" cy="242.0" r="9.6" fill="#ff0000" fill-opacity="0.82"/>
<circle cx="103.2" cy="228.7" r="9.6" fill="#ff0000" fill-opacity="0.82"/>
<circle cx="126.4" cy="254.5" r="9.6" fill="#ffff00" fill-opacity="0.82"/>
<circle cx="126.8" cy="254.6" r="9.6" fill="#ffff00" fill-opacity="0.82"/>
<circle cx="128.6" cy="204.1" r="9.6" fill="#ffff00" fill-opacity="0.82"/>
<circle cx="116.2" cy="160.0" r="9.6" fill="#999999" fill-opacity="0.82"/>
<circle cx="148.5" cy="154.1" r="9.6" fill="#00e400" fill-opacity="0.82"/>
<circle cx="156.6" cy="191.0" r="9.6" fill="#999999" fill-opacity="0.82"/>
<circle cx="162.6" cy="171.5" r="9.6" fill="#ffff00" fill-opacity="0.82"/>
<circle cx="171.4" cy="185.3" r="9.6" fill="#ff7e00" fill-opacity="0.82"/>
<circle cx="186.2" cy="193.6" r="9.6" fill="#00e400" fill-opacity="0.82"/>
<circle cx="190.2" cy="189.3" r="9.6" fill="#ff0000" fill-opacity="0.82"/>
<circle cx="49.0" cy="102.9" r="9.6" fill="#ff7e00" fill-opacity="0.82"/>
<circle cx="59.8" cy="108.6" r="9.6" fill="#ffff00" fill-opacity="0.82"/>
<circle cx="201.5" cy="132.0" r="9.6" fill="#ffff00" fill-opacity="0.82"/>
<circle cx="242.8" cy="114.7" r="9.6" fill="#ffff00" fill-opacity="0.82"/>
<circle cx="241.0" cy="128.8" r="9.6" fill="#ffff00" fill-opacity="0.82"/>
<circle cx="242.4" cy="147.9" r="9.6" fill="#ffff00" fill-opacity="0.82"/>
<circle cx="251.0" cy="149.7" r="9.6" fill="#ffff00" fill-opacity="0.82"/>
<circle cx="257.8" cy="151.8" r="9.6" fill="#ffff00" fill-opacity="0.82"/>
<circle cx="262.0" cy="160.6" r="9.6" fill="#ffff00" fill-opacity="0.82"/>
<circle cx="272.9" cy="175.4" r="9.6" fill="#ffff00" fill-opacity="0.82"/>
<circle cx="235.0" cy="191.2" r="9.6" fill="#ffff00" fill-opacity="0.82"/>
<circle cx="256.9" cy="214.0" r="9.6" fill="#ffff00" fill-opacity="0.82"/>
<circle cx="278.0" cy="221.2" r="9.6" fill="#ffff00" fill-opacity="0.82"/>
<circle cx="284.9" cy="238.5" r="9.6" fill="#ffff00" fill-opacity="0.82"/>
<circle cx="283.3" cy="261.0" r="9.6" fill="#999999" fill-opacity="0.82"/>
<circle cx="304.0" cy="178.5" r="9.6" fill="#ff0000" fill-opacity="0.82"/>
<circle cx="315.5" cy="200.2" r="9.6" fill="#ff7e00" fill-opacity="0.82"/>
<circle cx="323.8" cy="195.3" r="9.6" fill="#ff0000" fill-opacity="0.82"/>
<circle cx="344.8" cy="222.8" r="9.6" fill="#ffff00" fill-opacity="0.82"/>
<circle cx="370.3" cy="219.0" r="9.6" fill="#999999" fill-opacity="0.82"/>
<circle cx="382.0" cy="206.5" r="9.6" fill="#ffff00" fill-opacity="0.82"/>
<circle cx="385.3" cy="247.3" r="9.6" fill="#ffff00" fill-opacity="0.82"/>
<circle cx="410.3" cy="198.3" r="9.6" fill="#ffff00" fill-opacity="0.82"/>
<circle cx="441.5" cy="163.3" r="9.6" fill="#00e400" fill-opacity="0.82"/>
<circle cx="422.0" cy="122.5" r="9.6" fill="#ff7e00" fill-opacity="0.82"/>
<circle cx="449.0" cy="112.8" r="9.6" fill="#999999" fill-opacity="0.82"/>
<circle cx="386.0" cy="80.3" r="9.6" fill="#999999" fill-opacity="0.82"/>
<circle cx="262.8" cy="108.0" r="9.6" fill="#ffff00" fill-opacity="0.82"/>
<circle cx="272.3" cy="105.2" r="9.6" fill="#ffff00" fill-opacity="0.82"/>
<rect x="0.9" y="249.7" width="14.5" height="7" rx="1.5" fill="#fff"/>
<text x="8.2" y="256.2" font-size="8.3" fill="#111">143</text>
<rect x="30.1" y="238.0" width="14.5" height="7" rx="1.5" fill="#fff"/>
<text x="37.4" y="244.5" font-size="8.3" fill="#111">185</text>
<rect x="95.9" y="224.7" width="14.5" height="7" rx="1.5" fill="#fff"/>
<text x="103.2" y="231.2" font-size="8.3" fill="#111">176</text>
<rect x="120.0" y="250.5" width="14.5" height="7" rx="1.5" fill="#fff"/>
<text x="127.3" y="257.0" font-size="8.3" fill="#111">100</text>
<rect x="122.6" y="250.6" width="9.9" height="7" rx="1.5" fill="#fff"/>
<text x="127.6" y="257.1" font-size="8.3" fill="#111">59</text>
<rect x="123.6" y="200.1" width="9.9" height="7" rx="1.5" fill="#fff"/>
<text x="128.6" y="206.6" font-size="8.3" fill="#111">73</text>
<rect x="108.3" y="156.0" width="15.9" height="7" rx="1.5" fill="#fff"/>
<text x="116.2" y="162.5" font-size="8.3" fill="#111">N/A</text>
<rect x="143.5" y="150.1" width="9.9" height="7" rx="1.5" fill="#fff"/>
<text x="148.5" y="156.6" font-size="8.3" fill="#111">41</text>
<rect x="148.7" y="187.0" width="15.9" height="7" rx="1.5" fill="#fff"/>
<text x="156.6" y="193.5" font-size="8.3" fill="#111">N/A</text>
<rect x="157.6" y="167.5" width="9.9" height="7" rx="1.5" fill="#fff"/>
<text x="162.6" y="174.0" font-size="8.3" fill="#111">99</text>
<rect x="164.1" y="181.3" width="14.5" height="7" rx="1.5" fill="#fff"/>
<text x="171.4" y="187.8" font-size="8.3" fill="#111">127</text>
<rect x="181.2" y="189.6" width="9.9" height="7" rx="1.5" fill="#fff"/>
<text x="186.2" y="196.1" font-size="8.3" fill="#111">50</text>
<rect x="182.9" y="185.3" width="14.5" height="7" rx="1.5" fill="#fff"/>
<text x="190.2" y="191.8" font-size="8.3" fill="#111">153</text>
<rect x="41.7" y="98.9" width="14.5" height="7" rx="1.5" fill="#fff"/>
<text x="49.0" y="105.4" font-size="8.3" fill="#111">117</text>
<rect x="54.8" y="104.6" width="9.9" height="7" rx="1.5" fill="#fff"/>
<text x="59.8" y="111.1" font-size="8.3" fill="#111">61</text>
<rect x="196.5" y="128.0" width="9.9" height="7" rx="1.5" fill="#fff"/>
<text x="201.5" y="134.5" font-size="8.3" fill="#111">62</text>
<rect x="237.8" y="110.7" width="9.9" height="7" rx="1.5" fill="#fff"/>
<text x="242.8" y="117.2" font-size="8.3" fill="#111">58</text>
<rect x="236.0" y="124.8" width="9.9" height="7" rx="1.5" fill="#fff"/>
<text x="241.0" y="131.3" font-size="8.3" fill="#111">83</text>
<rect x="237.4" y="143.9" width="9.9" height="7" rx="1.5" fill="#fff"/>
<text x="242.4" y="150.4" font-size="8.3" fill="#111">88</text>
<rect x="246.0" y="145.7" width="9.9" height="7" rx="1.5" fill="#fff"/>
<text x="251.0" y="152.2" font-size="8.3" fill="#111">95</text>
<rect x="252.8" y="147.8" width="9.9" height="7" rx="1.5" fill="#fff"/>
<text x="257.8" y="154.3" font-size="8.3" fill="#111">75</text>
<rect x="257.0" y="156.6" width="9.9" height="7" rx="1.5" fill="#fff"/>
<text x="262.0" y="163.1" font-size="8.3" fill="#111">94</text>
<rect x="267.9" y="171.4" width="9.9" height="7" rx="1.5" fill="#fff"/>
<text x="272.9" y="177.9" font-size="8.3" fill="#111">97</text>
<rect x="230.0" y="187.2" width="9.9" height="7" rx="1.5" fill="#fff"/>
<text x="235.0" y="193.7" font-size="8.3" fill="#111">96</text>
<rect x="251.9" y="210.0" width="9.9" height="7" rx="1.5" fill="#fff"/>
<text x="256.9" y="216.5" font-size="8.3" fill="#111">76</text>
<rect x="273.0" y="217.2" width="9.9" height="7" rx="1.5" fill="#fff"/>
<text x="278.0" y="223.7" font-size="8.3" fill="#111">99</text>
<rect x="279.9" y="234.5" width="9.9" height="7" rx="1.5" fill="#fff"/>
<text x="284.9" y="241.0" font-size="8.3" fill="#111">72</text>
<rect x="275.4" y="257.0" width="15.9" height="7" rx="1.5" fill="#fff"/>
<text x="283.3" y="263.5" font-size="8.3" fill="#111">N/A</text>
<rect x="296.7" y="174.5" width="14.5" height="7" rx="1.5" fill="#fff"/>
<text x="304.0" y="181.0" font-size="8.3" fill="#111">160</text>
<rect x="308.2" y="196.2" width="14.5" height="7" rx="1.5" fill="#fff"/>
<text x="315.5" y="202.7" font-size="8.3" fill="#111">140</text>
<rect x="317.7" y="191.3" width="14.5" height="7" rx="1.5" fill="#fff"/>
<text x="325.0" y="197.8" font-size="8.3" fill="#111">159</text>
<rect x="339.8" y="218.8" width="9.9" height="7" rx="1.5" fill="#fff"/>
<text x="344.8" y="225.3" font-size="8.3" fill="#111">78</text>
<rect x="362.4" y="215.0" width="15.9" height="7" rx="1.5" fill="#fff"/>
<text x="370.3" y="221.5" font-size="8.3" fill="#111">N/A</text>
<rect x="377.0" y="202.5" width="9.9" height="7" rx="1.5" fill="#fff"/>
<text x="382.0" y="209.0" font-size="8.3" fill="#111">78</text>
<rect x="380.3" y="243.3" width="9.9" height="7" rx="1.5" fill="#fff"/>
<text x="385.3" y="249.8" font-size="8.3" fill="#111">67</text>
<rect x="405.3" y="194.3" width="9.9" height="7" rx="1.5" fill="#fff"/>
<text x="410.3" y="200.8" font-size="8.3" fill="#111">58</text>
<rect x="436.5" y="159.3" width="9.9" height="7" rx="1.5" fill="#fff"/>
<text x="441.5" y="165.8" font-size="8.3" fill="#111">43</text>
<rect x="414.7" y="118.5" width="14.5" height="7" rx="1.5" fill="#fff"/>
<text x="422.0" y="125.0" font-size="8.3" fill="#111">122</text>
<rect x="441.1" y="108.8" width="15.9" height="7" rx="1.5" fill="#fff"/>
<text x="449.0" y="115.3" font-size="8.3" fill="#111">N/A</text>
<rect x="378.1" y="76.3" width="15.9" height="7" rx="1.5" fill="#fff"/>
<text x="386.0" y="82.8" font-size="8.3" fill="#111">N/A</text>
<rect x="257.8" y="104.0" width="9.9" height="7" rx="1.5" fill="#fff"/>
<text x="262.8" y="110.5" font-size="8.3" fill="#111">72</text>
<rect x="267.3" y="101.2" width="9.9" height="7" rx="1.5" fill="#fff"/>
<text x="272.3" y="107.7" font-size="8.3" fill="#111">59</text>
</g>
</svg><div id="pop"><div class="pt">Bishkek<br>2021-04-11 7:00 PM<br>(LT)</div>
<div class="th"><span style="left:0;width:55.5px">Pollutant</span><span style="left:55.5px;width:31.5px">AQI</span></div>
<div class="tb"><span style="left:0;width:54.5px;border-right:1px solid #004882">PM2.5</span><span style="left:55.5px;width:29.5px;background:#ffff00">72</span></div>
<i></i></div></div>

<div class="abs bar" style="top:11.5px">Select a City</div>
<div class="abs sel" style="top:36px"><span>Bishkek</span><i style="right:18.5px;color:#888">×</i><i class="arr"></i></div>
<div class="abs bar" style="top:74.5px">Select a Parameter</div>
<div class="abs sel" style="top:100px"><span>PM2.5</span><i style="right:18.5px;color:#888">×</i><i class="arr"></i></div>
<div id="citybox" class="abs"><b>Bishkek</b><svg style="position:absolute;left:191px;top:16px" width="23" height="24" viewBox="0 0 23 24"><rect width="23" height="24" fill="#f2b53f"/><circle cx="4.9" cy="18.9" r="2.1" fill="#fff"/><path d="M2.9 10.8A10.2 10.2 0 0 1 13.1 21M2.9 4.8A16.2 16.2 0 0 1 19.1 21" fill="none" stroke="#fff" stroke-width="3"/></svg></div>
<div id="note" class="abs">Note: Values above 500 are considered Beyond the AQI. Follow<br>recommendations for the Hazardous category. Additional information<br>on reducing exposure to extremely high levels of particle pollution is<br>available <b>here</b>.</div>

<div id="tab1" class="abs tab">AQI</div>
<div class="abs tab" style="left:99px;width:112px">Concentration</div>
<div class="abs tab" style="left:213px;width:92px">Historical</div>
<div id="tabline" class="abs"></div>
<div id="learn" class="abs">Learn more about how the Air Quality Index [AQI] is calculated from the EPA <b>here</b>.</div>

<div id="chart" class="abs"><svg width="534" height="255" viewBox="0 0 534 255" style="position:absolute;left:0;top:0" font-family="'DejaVu Sans','Liberation Sans',sans-serif">
<text x="267" y="15.6" text-anchor="middle" font-size="11.6" fill="#333">Bishkek – PM2.5</text>
<rect x="50.25" y="40.00" width="477" height="1.2" fill="#e0e0e0"/>
<text x="40.4" y="42.1" text-anchor="end" font-size="7" fill="#111">500</text>
<rect x="50.25" y="64.30" width="477" height="1.2" fill="#e0e0e0"/>
<text x="40.4" y="66.4" text-anchor="end" font-size="7" fill="#111">400</text>
<rect x="50.25" y="88.60" width="477" height="1.2" fill="#e0e0e0"/>
<text x="40.4" y="90.7" text-anchor="end" font-size="7" fill="#111">300</text>
<rect x="50.25" y="112.90" width="477" height="1.2" fill="#e0e0e0"/>
<text x="40.4" y="115.0" text-anchor="end" font-size="7" fill="#111">200</text>
<rect x="50.25" y="137.20" width="477" height="1.2" fill="#e0e0e0"/>
<text x="40.4" y="139.3" text-anchor="end" font-size="7" fill="#111">100</text>
<text x="40.4" y="163.6" text-anchor="end" font-size="7" fill="#111">0</text>
<text transform="translate(19.1,97.8) rotate(-90)" text-anchor="middle" font-size="8" font-family="'Liberation Sans',sans-serif" fill="#111">AQI</text>
<rect x="55.29" y="147.10" width="9.8" height="14.90" fill="#ffff00" stroke="#5a5a2a" stroke-width="1"/>
<rect x="75.16" y="146.60" width="9.8" height="15.40" fill="#ffff00" stroke="#5a5a2a" stroke-width="1"/>
<rect x="95.04" y="141.00" width="9.8" height="21.00" fill="#ffff00" stroke="#5a5a2a" stroke-width="1"/>
<rect x="114.91" y="139.90" width="9.8" height="22.10" fill="#ffff00" stroke="#5a5a2a" stroke-width="1"/>
<rect x="134.79" y="141.00" width="9.8" height="21.00" fill="#ffff00" stroke="#5a5a2a" stroke-width="1"/>
<rect x="154.66" y="144.60" width="9.8" height="17.40" fill="#ffff00" stroke="#5a5a2a" stroke-width="1"/>
<rect x="174.54" y="145.70" width="9.8" height="16.30" fill="#ffff00" stroke="#5a5a2a" stroke-width="1"/>
<rect x="194.41" y="145.70" width="9.8" height="16.30" fill="#ffff00" stroke="#5a5a2a" stroke-width="1"/>
<rect x="214.29" y="147.50" width="9.8" height="14.50" fill="#ffff00" stroke="#5a5a2a" stroke-width="1"/>
<rect x="234.16" y="146.80" width="9.8" height="15.20" fill="#ffff00" stroke="#5a5a2a" stroke-width="1"/>
<rect x="254.04" y="147.50" width="9.8" height="14.50" fill="#ffff00" stroke="#5a5a2a" stroke-width="1"/>
<rect x="273.91" y="149.10" width="9.8" height="12.90" fill="#ffff00" stroke="#5a5a2a" stroke-width="1"/>
<rect x="293.79" y="149.75" width="9.8" height="12.25" fill="#ffff00" stroke="#5a5a2a" stroke-width="1"/>
<rect x="313.66" y="148.60" width="9.8" height="13.40" fill="#ffff00" stroke="#5a5a2a" stroke-width="1"/>
<rect x="333.54" y="149.75" width="9.8" height="12.25" fill="#ffff00" stroke="#5a5a2a" stroke-width="1"/>
<rect x="353.41" y="149.75" width="9.8" height="12.25" fill="#ffff00" stroke="#5a5a2a" stroke-width="1"/>
<rect x="373.29" y="149.75" width="9.8" height="12.25" fill="#ffff00" stroke="#5a5a2a" stroke-width="1"/>
<rect x="393.16" y="148.00" width="9.8" height="14.00" fill="#ffff00" stroke="#5a5a2a" stroke-width="1"/>
<rect x="413.04" y="141.90" width="9.8" height="20.10" fill="#ffff00" stroke="#5a5a2a" stroke-width="1"/>
<rect x="432.91" y="141.90" width="9.8" height="20.10" fill="#ffff00" stroke="#5a5a2a" stroke-width="1"/>
<rect x="452.79" y="141.90" width="9.8" height="20.10" fill="#ffff00" stroke="#5a5a2a" stroke-width="1"/>
<rect x="472.66" y="143.70" width="9.8" height="18.30" fill="#ffff00" stroke="#5a5a2a" stroke-width="1"/>
<rect x="492.54" y="144.60" width="9.8" height="17.40" fill="#ffff00" stroke="#5a5a2a" stroke-width="1"/>
<rect x="512.41" y="145.30" width="9.8" height="16.70" fill="#ffff00" stroke="#5a5a2a" stroke-width="1"/>
<rect x="50.25" y="161.50" width="477" height="1" fill="#c0d0e0"/>
<rect x="49.75" y="162.00" width="1" height="5.5" fill="#c0d0e0"/>
<rect x="69.62" y="162.00" width="1" height="5.5" fill="#c0d0e0"/>
<rect x="89.50" y="162.00" width="1" height="5.5" fill="#c0d0e0"/>
<rect x="109.38" y="162.00" width="1" height="5.5" fill="#c0d0e0"/>
<rect x="129.25" y="162.00" width="1" height="5.5" fill="#c0d0e0"/>
<rect x="149.12" y="162.00" width="1" height="5.5" fill="#c0d0e0"/>
<rect x="169.00" y="162.00" width="1" height="5.5" fill="#c0d0e0"/>
<rect x="188.88" y="162.00" width="1" height="5.5" fill="#c0d0e0"/>
<rect x="208.75" y="162.00" width="1" height="5.5" fill="#c0d0e0"/>
<rect x="228.62" y="162.00" width="1" height="5.5" fill="#c0d0e0"/>
<rect x="248.50" y="162.00" width="1" height="5.5" fill="#c0d0e0"/>
<rect x="268.38" y="162.00" width="1" height="5.5" fill="#c0d0e0"/>
<rect x="288.25" y="162.00" width="1" height="5.5" fill="#c0d0e0"/>
<rect x="308.12" y="162.00" width="1" height="5.5" fill="#c0d0e0"/>
<rect x="328.00" y="162.00" width="1" height="5.5" fill="#c0d0e0"/>
<rect x="347.88" y="162.00" width="1" height="5.5" fill="#c0d0e0"/>
<rect x="367.75" y="162.00" width="1" height="5.5" fill="#c0d0e0"/>
<rect x="387.62" y="162.00" width="1" height="5.5" fill="#c0d0e0"/>
<rect x="407.50" y="162.00" width="1" height="5.5" fill="#c0d0e0"/>
<rect x="427.38" y="162.00" width="1" height="5.5" fill="#c0d0e0"/>
<rect x="447.25" y="162.00" width="1" height="5.5" fill="#c0d0e0"/>
<rect x="467.12" y="162.00" width="1" height="5.5" fill="#c0d0e0"/>
<rect x="487.00" y="162.00" width="1" height="5.5" fill="#c0d0e0"/>
<rect x="506.88" y="162.00" width="1" height="5.5" fill="#c0d0e0"/>
<rect x="526.75" y="162.00" width="1" height="5.5" fill="#c0d0e0"/>
<text transform="translate(62.2,172.7) rotate(-45)" text-anchor="end" font-size="7.2" fill="#666">8 PM</text>
<text transform="translate(82.1,172.7) rotate(-45)" text-anchor="end" font-size="7.2" fill="#666">9 PM</text>
<text transform="translate(101.9,172.7) rotate(-45)" text-anchor="end" font-size="7.2" fill="#666">10 PM</text>
<text transform="translate(121.8,172.7) rotate(-45)" text-anchor="end" font-size="7.2" fill="#666">11 PM</text>
<text transform="translate(141.7,172.7) rotate(-45)" text-anchor="end" font-size="7.2" fill="#666">Apr 11, 2021 12 AM</text>
<text transform="translate(161.6,172.7) rotate(-45)" text-anchor="end" font-size="7.2" fill="#666">1 AM</text>
<text transform="translate(181.4,172.7) rotate(-45)" text-anchor="end" font-size="7.2" fill="#666">2 AM</text>
<text transform="translate(201.3,172.7) rotate(-45)" text-anchor="end" font-size="7.2" fill="#666">3 AM</text>
<text transform="translate(221.2,172.7) rotate(-45)" text-anchor="end" font-size="7.2" fill="#666">4 AM</text>
<text transform="translate(241.1,172.7) rotate(-45)" text-anchor="end" font-size="7.2" fill="#666">5 AM</text>
<text transform="translate(260.9,172.7) rotate(-45)" text-anchor="end" font-size="7.2" fill="#666">6 AM</text>
<text transform="translate(280.8,172.7) rotate(-45)" text-anchor="end" font-size="7.2" fill="#666">7 AM</text>
<text transform="translate(300.7,172.7) rotate(-45)" text-anchor="end" font-size="7.2" fill="#666">8 AM</text>
<text transform="translate(320.6,172.7) rotate(-45)" text-anchor="end" font-size="7.2" fill="#666">9 AM</text>
<text transform="translate(340.4,172.7) rotate(-45)" text-anchor="end" font-size="7.2" fill="#666">10 AM</text>
<text transform="translate(360.3,172.7) rotate(-45)" text-anchor="end" font-size="7.2" fill="#666">11 AM</text>
<text transform="translate(380.2,172.7) rotate(-45)" text-anchor="end" font-size="7.2" fill="#666">12 PM</text>
<text transform="translate(400.1,172.7) rotate(-45)" text-anchor="end" font-size="7.2" fill="#666">1 PM</text>
<text transform="translate(419.9,172.7) rotate(-45)" text-anchor="end" font-size="7.2" fill="#666">2 PM</text>
<text transform="translate(439.8,172.7) rotate(-45)" text-anchor="end" font-size="7.2" fill="#666">3 PM</text>
<text transform="translate(459.7,172.7) rotate(-45)" text-anchor="end" font-size="7.2" fill="#666">4 PM</text>
<text transform="translate(479.6,172.7) rotate(-45)" text-anchor="end" font-size="7.2" fill="#666">5 PM</text>
<text transform="translate(499.4,172.7) rotate(-45)" text-anchor="end" font-size="7.2" fill="#666">6 PM</text>
<text transform="translate(519.3,172.7) rotate(-45)" text-anchor="end" font-size="7.2" fill="#666">7 PM</text>
<rect x="252.3" y="240.2" width="10" height="7.6" fill="#cccccc"/>
<text x="266.5" y="246.7" font-size="7.2" font-weight="bold" fill="#222">AQI</text>
</svg></div>

<div id="cc" class="abs">
 <div class="h"><div style="margin-top:4px">Current Conditions</div><div style="font-size:8px">observed at</div><div>Apr 11, 2021 7:00 PM (LT)</div></div>
 <div class="y"><div style="margin-top:9px">72 AQI</div><div>Moderate</div><div>PM2.5</div></div>
 <div class="m"><div class="t">Health Message</div><div class="p">The AQI is between 51 and 100. Air quality is<br>acceptable; however, pollution in this range<br>may pose a moderate health concern for a<br>very small number of individuals. People<br>who are unusually sensitive to ozone or<br>particle pollution may experience respiratory<br>symptoms.</div></div>
</div>
</body>
</html>
